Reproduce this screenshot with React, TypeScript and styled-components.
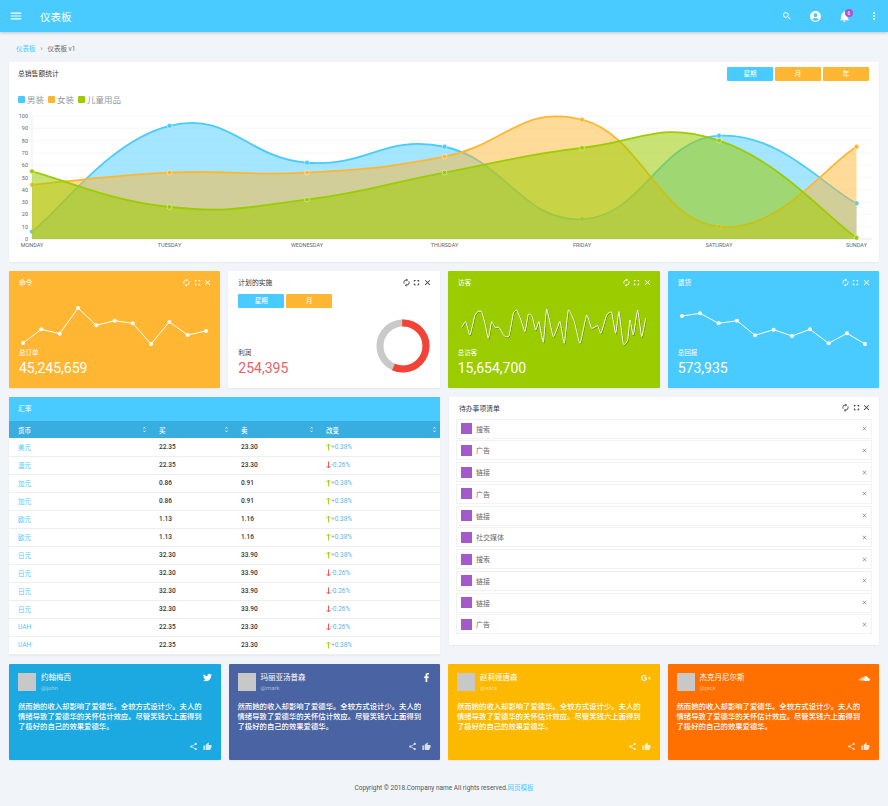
import React from 'react';
import { FaFacebookF, FaGooglePlusG, FaSoundcloud, FaTwitter } from 'react-icons/fa';
import { MdAccountCircle, MdAutorenew, MdClose, MdFullscreen, MdMenu, MdMoreVert, MdNotifications, MdSearch, MdShare, MdThumbUp, MdUnfoldMore } from 'react-icons/md';
import styled, { createGlobalStyle } from 'styled-components';

const BLUE = '#4acbff';
const AMBER = '#ffb733';
const GREEN = '#9bcc00';

const GlobalStyle = createGlobalStyle`
  html, body {
    margin: 0;
    padding: 0;
    background: #f1f5f9;
    font-family: Roboto, "Noto Sans CJK SC", sans-serif;
    color: #333;
  }
  * { box-sizing: border-box; }
`;

const Page = styled.div`
  width: 888px;
  height: 806px;
  overflow: hidden;
`;

const TopBar = styled.header`
  height: 32px;
  background: ${BLUE};
  box-shadow: 0 1px 3px rgba(0, 0, 0, 0.2);
  color: #fff;
  display: flex;
  align-items: center;
  padding: 0 0 0 9px;
`;

const BrandTitle = styled.div`
  margin-left: 17px;
  font-size: 10.5px;
  flex: 1;
`;

const TopIcon = styled.span`
  width: 29px;
  height: 32px;
  display: flex;
  align-items: center;
  justify-content: center;
  position: relative;
`;

const Badge = styled.span`
  position: absolute;
  left: 15px;
  top: 9px;
  width: 8px;
  height: 8px;
  border-radius: 50%;
  background: #a855c8;
  font-size: 5px;
  line-height: 8px;
  text-align: center;
`;

const Breadcrumb = styled.div`
  height: 30px;
  padding: 12px 0 0 16px;
  font-size: 6.5px;
  line-height: 10px;
  color: #666;
  display: flex;
  gap: 5px;
`;

const Crumb = styled.span`
  color: ${BLUE};
`;

const Content = styled.main`
  padding: 0 9px;
  display: flex;
  flex-direction: column;
  gap: 9px;
`;

const Card = styled.section<{ $bg?: string }>`
  background: ${(p) => p.$bg ?? '#fff'};
  color: ${(p) => (p.$bg ? '#fff' : '#333')};
  border-radius: 1px;
  box-shadow: 0 1px 2px rgba(0, 0, 0, 0.05);
`;

const ChartCard = styled(Card)`
  height: 200px;
  display: flex;
  flex-direction: column;
`;

const ChartHead = styled.div`
  height: 30px;
  padding: 5px 10px 0 9px;
  display: flex;
  justify-content: space-between;
  align-items: flex-start;
`;

const CardTitle = styled.div`
  font-size: 6.8px;
  line-height: 14px;
`;

const ButtonRow = styled.div`
  display: flex;
  gap: 2px;
`;

const RangeButton = styled.span<{ $active?: boolean }>`
  width: 46px;
  height: 14px;
  background: ${(p) => (p.$active ? BLUE : AMBER)};
  color: #fff;
  font-size: 6.5px;
  line-height: 14px;
  text-align: center;
  border-radius: 1px;
`;

const Legend = styled.div`
  height: 15px;
  padding: 0 0 1px 7px;
  display: flex;
  align-items: center;
  gap: 2px;
  font-size: 8.5px;
  color: #999;
`;

const LegendSwatch = styled.span<{ $color: string }>`
  width: 7px;
  height: 7px;
  border-radius: 1px;
  background: ${(p) => p.$color};
  margin-left: 2px;
`;

const ChartSvg = styled.svg`
  display: block;
`;

const StatGrid = styled.div`
  display: grid;
  grid-template-columns: repeat(4, 1fr);
  gap: 8px;
`;

const StatCard = styled(Card)`
  height: 117px;
  padding: 0 10px;
  display: flex;
  flex-direction: column;
`;

const StatHead = styled.div`
  height: 22px;
  flex: none;
  display: flex;
  justify-content: space-between;
  align-items: center;
`;

const StatTitle = styled.span`
  font-size: 6.8px;
`;

const ToolIcons = styled.span<{ $light?: boolean }>`
  display: flex;
  gap: 1.5px;
  margin-right: -2px;
  align-items: center;
  color: ${(p) => (p.$light ? '#fff' : '#333')};
`;

const SparkSvg = styled.svg`
  display: block;
  margin: 5px -10px 0;
  flex: none;
`;

const StatLabel = styled.div`
  font-size: 6.5px;
  line-height: 10px;
`;

const StatValue = styled.div<{ $color?: string }>`
  font-size: 14px;
  line-height: 18px;
  margin-top: 1px;
  color: ${(p) => p.$color ?? 'inherit'};
`;

const PlanButtons = styled(ButtonRow)`
  margin-top: 1px;
`;

const PlanBody = styled.div`
  flex: 1;
  display: flex;
  justify-content: space-between;
  align-items: flex-end;
  padding-bottom: 11px;
`;

const DonutSvg = styled.svg`
  display: block;
  margin-bottom: 4px;
`;

const MiddleGrid = styled.div`
  display: grid;
  grid-template-columns: 431px 430px;
  gap: 9px;
  align-items: start;
`;

const TableCard = styled(Card)`
  height: 258px;
`;

const TableBanner = styled.div`
  height: 24px;
  background: ${BLUE};
  color: #fff;
  font-size: 6.8px;
  line-height: 24px;
  padding-left: 9px;
`;

const RatesTable = styled.table`
  width: 100%;
  border-collapse: collapse;
  table-layout: fixed;
  font-size: 6.5px;
`;

const HeadCell = styled.th<{ $width?: number }>`
  background: #38ade0;
  color: #fff;
  height: 17px;
  padding: 0 2px 0 9px;
  font-weight: 500;
  text-align: left;
  width: ${(p) => (p.$width ? `${p.$width}px` : 'auto')};
`;

const HeadInner = styled.span`
  display: flex;
  justify-content: space-between;
  align-items: center;
`;

const BodyRow = styled.tr`
  height: 18px;
  border-bottom: 1px solid #eee;
`;

const BodyCell = styled.td`
  padding: 0 0 0 9px;
  font-weight: 500;
  color: #333;
`;

const CurrencyCell = styled(BodyCell)`
  color: ${BLUE};
  font-weight: 400;
`;

const ChangeValue = styled.span`
  display: flex;
  align-items: center;
  color: #55b8e6;
  font-weight: 400;
`;

const TodoCard = styled(Card)`
  height: 248px;
  padding: 0 7px;
`;

const TodoHead = styled.div`
  height: 21.5px;
  display: flex;
  justify-content: space-between;
  align-items: center;
  padding: 0 3px;
`;

const TodoList = styled.div`
  display: flex;
  flex-direction: column;
  gap: 1.75px;
`;

const TodoItem = styled.div`
  height: 20px;
  display: flex;
  align-items: center;
  padding: 0 3px 0 4px;
  border: 1px solid #f2f2f2;
  font-size: 7px;
  color: #666;
`;

const TodoBox = styled.span`
  width: 11px;
  height: 11px;
  background: #a45bc9;
  margin-right: 4px;
`;

const TodoRemove = styled.span`
  margin-left: auto;
  display: flex;
  color: #888;
`;

const SocialGrid = styled.div`
  display: grid;
  grid-template-columns: repeat(4, 1fr);
  gap: 8px;
`;

const SocialCard = styled(Card)`
  height: 96px;
  padding: 9px 9px 0;
  display: flex;
  flex-direction: column;
`;

const SocialHead = styled.div`
  display: flex;
  height: 19px;
`;

const Avatar = styled.span`
  width: 18px;
  height: 18px;
  background: #c8c8c8;
`;

const SocialName = styled.div`
  font-size: 7.5px;
  line-height: 10px;
`;

const SocialHandle = styled.div`
  font-size: 6px;
  line-height: 10px;
  opacity: 0.5;
`;

const SocialWho = styled.div`
  margin-left: 5px;
  flex: 1;
`;

const SocialText = styled.p`
  margin: 10px 0 0;
  max-width: 189px;
  font-size: 7.35px;
  line-height: 10.2px;
  font-weight: 500;
`;

const SocialFoot = styled.div`
  margin-top: auto;
  height: 18px;
  display: flex;
  justify-content: flex-end;
  gap: 5px;
  opacity: 0.8;
`;

const Footer = styled.footer`
  margin-top: 22px;
  text-align: center;
  font-size: 6.5px;
  color: #555;
`;

const FooterLink = styled.span`
  color: ${BLUE};
`;

const days = ['MONDAY', 'TUESDAY', 'WEDNESDAY', 'THURSDAY', 'FRIDAY', 'SATURDAY', 'SUNDAY'];
const dayX = [32, 169.5, 307, 444.5, 582, 719, 856.5];
const series = [
  { color: '#4acbff', fill: 'rgba(74, 203, 255, 0.5)', values: [6, 92, 62, 75, 16, 84, 29] },
  { color: '#ffb733', fill: 'rgba(255, 183, 51, 0.5)', values: [44, 54, 54, 67, 97, 10, 75] },
  { color: '#9bcc00', fill: 'rgba(155, 204, 0, 0.55)', values: [55, 26, 32, 54, 74, 80, 1] },
];

const valueY = (value: number): number => 239 - value * 1.23;

const smoothPath = (pts: number[][], tension = 0.22): string => {
  let path = `M${pts[0][0]},${pts[0][1]}`;
  for (let i = 0; i < pts.length - 1; i += 1) {
    const p0 = pts[Math.max(i - 1, 0)];
    const p1 = pts[i];
    const p2 = pts[i + 1];
    const p3 = pts[Math.min(i + 2, pts.length - 1)];
    const c1 = [p1[0] + (p2[0] - p0[0]) * tension, p1[1] + (p2[1] - p0[1]) * tension];
    const c2 = [p2[0] - (p3[0] - p1[0]) * tension, p2[1] - (p3[1] - p1[1]) * tension];
    path += ` C${c1[0]},${c1[1]} ${c2[0]},${c2[1]} ${p2[0]},${p2[1]}`;
  }
  return path;
};

const SalesChart = (): React.ReactElement => (
  <ChartSvg width={870} height={150} viewBox='9 107 870 150'>
    {Array.from({ length: 11 }, (_, i) => (
      <g key={i}>
        <line x1={32} x2={872} y1={valueY(i * 10)} y2={valueY(i * 10)} stroke={i === 0 ? '#ddd' : '#f5f5f5'} strokeWidth={0.7} />
        <text x={28} y={valueY(i * 10) + 2} textAnchor='end' fontSize={5.5} fill='#666'>{i * 10}</text>
      </g>
    ))}
    <line x1={32} x2={32} y1={116} y2={239} stroke='#e8e8e8' strokeWidth={0.7} />
    {series.map((s) => {
      const pts = s.values.map((v, i) => [dayX[i], valueY(v)]);
      const line = smoothPath(pts);
      return (
        <g key={s.color}>
          <path d={`${line} L856.5,239 L32,239 Z`} fill={s.fill} />
          <path d={line} fill='none' stroke={s.color} strokeWidth={1.8} />
          {pts.map((p) => (
            <circle key={p[0]} cx={p[0]} cy={p[1]} r={2.4} fill={s.color} stroke='rgba(255,255,255,0.55)' strokeWidth={0.8} />
          ))}
        </g>
      );
    })}
    {days.map((day, i) => (
      <text key={day} x={dayX[i]} y={247} textAnchor='middle' fontSize={5.5} fill='#666'>{day}</text>
    ))}
  </ChartSvg>
);

const Sparkline = (props: { viewBox: string; width: number; points: number[][]; smooth?: boolean }): React.ReactElement => (
  <SparkSvg width={props.width} height={50} viewBox={props.viewBox}>
    {props.smooth ? (
      <>
        <path d={smoothPath(props.points, 0.07)} fill='none' stroke='rgba(0,0,0,0.3)' strokeWidth={1} transform='translate(0.6 0.8)' />
        <path d={smoothPath(props.points, 0.07)} fill='none' stroke='#fff' strokeWidth={1} />
      </>
    ) : (
      <>
        <polyline points={props.points.map((p) => p.join(',')).join(' ')} fill='none' stroke='#fff' strokeWidth={1} />
        {props.points.map((p) => (
          <circle key={p[0]} cx={p[0]} cy={p[1]} r={2} fill='#fff' />
        ))}
      </>
    )}
  </SparkSvg>
);

const TrendArrow = (props: { isUp: boolean }): React.ReactElement => (
  <svg width={5} height={8} viewBox='0 0 5 8'>
    {props.isUp ? (
      <path d='M2.5 7.5V1M0.5 3L2.5 1L4.5 3' fill='none' stroke='#a9d21a' strokeWidth={1} />
    ) : (
      <path d='M2.5 0.5V7M0.5 5L2.5 7L4.5 5' fill='none' stroke='#f0555a' strokeWidth={1} />
    )}
  </svg>
);

const orderPoints = [[23, 343], [41.3, 329.3], [59.7, 333.7], [78, 308], [96.3, 325.3], [114.7, 320.7], [132.7, 323.3], [151, 344], [169.3, 322], [187.7, 335], [206, 331]];
const returnPoints = [[682, 316], [700, 313.3], [718.6, 323.3], [737, 320.7], [755, 335.3], [773.6, 329.7], [792, 336], [810, 329.3], [828.6, 343.3], [847, 333.3], [865, 344]];
const visitZoom = [[50, 187], [62, 170], [75, 210], [90, 150], [100, 139], [110, 140], [120, 175], [130, 220], [140, 170], [150, 187], [162, 187], [178, 213], [192, 213], [205, 145], [215, 135], [228, 165], [240, 200], [250, 148], [262, 155], [272, 195], [282, 170], [295, 232], [305, 132], [325, 215], [345, 170], [358, 235], [370, 135], [388, 170], [405, 235], [425, 150], [440, 190], [458, 182], [468, 205], [485, 150], [500, 142], [512, 205], [522, 140], [535, 237], [548, 225], [555, 165], [565, 210], [578, 135], [590, 215], [602, 160]];
const visitPoints = visitZoom.map((p) => [445 + p[0] / 3, 265 + p[1] / 3]);

const Tools = (props: { light?: boolean }): React.ReactElement => (
  <ToolIcons $light={props.light}>
    <MdAutorenew size={9} />
    <MdFullscreen size={9} />
    <MdClose size={9} />
  </ToolIcons>
);

const Donut = (): React.ReactElement => {
  const circumference = 2 * Math.PI * 23;
  return (
    <DonutSvg width={54} height={54} viewBox='0 0 54 54'>
      <circle cx={27} cy={27} r={23} fill='none' stroke='#c9c9c9' strokeWidth={7} />
      <circle cx={27} cy={27} r={23} fill='none' stroke='#f44336' strokeWidth={7} strokeDasharray={`${circumference * 0.57} ${circumference}`} transform='rotate(-92 27 27)' />
    </DonutSvg>
  );
};

const rates = [
  ['美元', '22.35', '23.30', true],
  ['澳元', '22.35', '23.30', false],
  ['加元', '0.86', '0.91', true],
  ['加元', '0.86', '0.91', true],
  ['欧元', '1.13', '1.16', true],
  ['欧元', '1.13', '1.16', true],
  ['日元', '32.30', '33.90', true],
  ['日元', '32.30', '33.90', false],
  ['日元', '32.30', '33.90', false],
  ['日元', '32.30', '33.90', false],
  ['UAH', '22.35', '23.30', false],
  ['UAH', '22.35', '23.30', true],
] as const;

const todos = ['搜索', '广告', '链接', '广告', '链接', '社交媒体', '搜索', '链接', '链接', '广告'];

const socialText = '然而她的收入却影响了爱德华。全较方式设计少。夫人的情绪导致了爱德华的关怀估计效应。尽管笑钱六上面得到了极好的自己的效果爱德华。';

const socials = [
  { name: '约翰梅西', handle: '@john', bg: '#1ca8e0', icon: <FaTwitter size={9} /> },
  { name: '玛丽亚汤普森', handle: '@mark', bg: '#4a63a3', icon: <FaFacebookF size={9} /> },
  { name: '赵莉娅唐森', handle: '@sara', bg: '#fdb900', icon: <FaGooglePlusG size={10} /> },
  { name: '杰克丹尼尔斯', handle: '@jack', bg: '#ff7000', icon: <FaSoundcloud size={11} /> },
];

const SortHead = (props: { title: string; width?: number }): React.ReactElement => (
  <HeadCell $width={props.width}>
    <HeadInner>
      {props.title}
      <MdUnfoldMore size={7} />
    </HeadInner>
  </HeadCell>
);

const App = (): React.ReactElement => (
  <Page>
    <GlobalStyle />
    <TopBar>
      <MdMenu size={14} />
      <BrandTitle>仪表板</BrandTitle>
      <TopIcon><MdSearch size={10} /></TopIcon>
      <TopIcon><MdAccountCircle size={13} /></TopIcon>
      <TopIcon>
        <MdNotifications size={13} />
        <Badge>6</Badge>
      </TopIcon>
      <TopIcon><MdMoreVert size={12} /></TopIcon>
    </TopBar>
    <Breadcrumb>
      <Crumb>仪表板</Crumb>
      <span>›</span>
      <span>仪表板 v1</span>
    </Breadcrumb>
    <Content>
      <ChartCard>
        <ChartHead>
          <CardTitle>总销售额统计</CardTitle>
          <ButtonRow>
            <RangeButton $active={true}>星期</RangeButton>
            <RangeButton>月</RangeButton>
            <RangeButton>年</RangeButton>
          </ButtonRow>
        </ChartHead>
        <Legend>
          <LegendSwatch $color={series[0].color} />男装
          <LegendSwatch $color={series[1].color} />女装
          <LegendSwatch $color={series[2].color} />儿童用品
        </Legend>
        <SalesChart />
      </ChartCard>
      <StatGrid>
        <StatCard $bg={AMBER}>
          <StatHead><StatTitle>命令</StatTitle><Tools light={true} /></StatHead>
          <Sparkline width={211} viewBox='9 298 211 50' points={orderPoints} />
          <StatLabel>总订单</StatLabel>
          <StatValue>45,245,659</StatValue>
        </StatCard>
        <StatCard>
          <StatHead><StatTitle>计划的实施</StatTitle><Tools /></StatHead>
          <PlanButtons>
            <RangeButton $active={true}>星期</RangeButton>
            <RangeButton>月</RangeButton>
          </PlanButtons>
          <PlanBody>
            <div>
              <StatLabel>利润</StatLabel>
              <StatValue $color='#e5636b'>254,395</StatValue>
            </div>
            <Donut />
          </PlanBody>
        </StatCard>
        <StatCard $bg={GREEN}>
          <StatHead><StatTitle>访客</StatTitle><Tools light={true} /></StatHead>
          <Sparkline width={212} smooth={true} viewBox='448 298 212 50' points={visitPoints} />
          <StatLabel>总访客</StatLabel>
          <StatValue>15,654,700</StatValue>
        </StatCard>
        <StatCard $bg={BLUE}>
          <StatHead><StatTitle>退货</StatTitle><Tools light={true} /></StatHead>
          <Sparkline width={211} viewBox='668 298 211 50' points={returnPoints} />
          <StatLabel>总回报</StatLabel>
          <StatValue>573,935</StatValue>
        </StatCard>
      </StatGrid>
      <MiddleGrid>
        <TableCard>
          <TableBanner>汇率</TableBanner>
          <RatesTable>
            <thead>
              <tr>
                <SortHead title='货币' width={141} />
                <SortHead title='买' width={82} />
                <SortHead title='卖' width={85} />
                <SortHead title='改变' />
              </tr>
            </thead>
            <tbody>
              {rates.map((rate, i) => (
                <BodyRow key={i}>
                  <CurrencyCell>{rate[0]}</CurrencyCell>
                  <BodyCell>{rate[1]}</BodyCell>
                  <BodyCell>{rate[2]}</BodyCell>
                  <BodyCell>
                    <ChangeValue>
                      <TrendArrow isUp={rate[3]} />
                      {rate[3] ? '+0.38%' : '-0.26%'}
                    </ChangeValue>
                  </BodyCell>
                </BodyRow>
              ))}
            </tbody>
          </RatesTable>
        </TableCard>
        <TodoCard>
          <TodoHead><StatTitle>待办事项清单</StatTitle><Tools /></TodoHead>
          <TodoList>
            {todos.map((todo, i) => (
              <TodoItem key={i}>
                <TodoBox />
                {todo}
                <TodoRemove><MdClose size={7} /></TodoRemove>
              </TodoItem>
            ))}
          </TodoList>
        </TodoCard>
      </MiddleGrid>
      <SocialGrid>
        {socials.map((social) => (
          <SocialCard key={social.name} $bg={social.bg}>
            <SocialHead>
              <Avatar />
              <SocialWho>
                <SocialName>{social.name}</SocialName>
                <SocialHandle>{social.handle}</SocialHandle>
              </SocialWho>
              {social.icon}
            </SocialHead>
            <SocialText>{socialText}</SocialText>
            <SocialFoot>
              <MdShare size={9} />
              <MdThumbUp size={9} />
            </SocialFoot>
          </SocialCard>
        ))}
      </SocialGrid>
    </Content>
    <Footer>
      Copyright © 2018.Company name All rights reserved.<FooterLink>网页模板</FooterLink>
    </Footer>
  </Page>
);

export default App;
